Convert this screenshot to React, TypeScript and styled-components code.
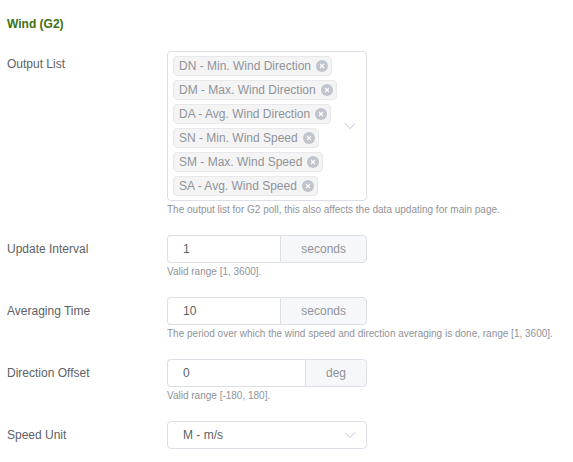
import React from "react";
import styled, { createGlobalStyle } from "styled-components";

const GlobalStyle = createGlobalStyle`
  html, body { margin: 0; padding: 0; background: #ffffff; }
  body { font-family: "Liberation Sans", Arial, sans-serif; }
  * { box-sizing: border-box; }
`;

const Page = styled.div`
  padding: 17px 7px 0 7px;
  font-family: "Liberation Sans", Arial, sans-serif;
`;

const Title = styled.div`
  font-size: 12px;
  line-height: 14px;
  font-weight: bold;
  color: #3c7014;
  margin-bottom: 20px;
`;

const FormItem = styled.div`
  display: grid;
  grid-template-columns: 160px 200px;
  align-items: start;
  margin-bottom: 18px;
`;

const Label = styled.div<{ $lh: number }>`
  font-size: 12px;
  line-height: ${(p) => p.$lh}px;
  color: #606266;
  white-space: nowrap;
`;

const Content = styled.div`
  display: flex;
  flex-direction: column;
  min-width: 0;
`;

const Help = styled.div`
  margin-top: 2px;
  font-size: 10px;
  line-height: 14px;
  color: #909399;
  white-space: nowrap;
`;

const SelectBox = styled.div`
  display: flex;
  align-items: center;
  width: 200px;
  border: 1px solid #dcdfe6;
  border-radius: 4px;
  background: #fff;
`;

const MultiBox = styled(SelectBox)`
  padding: 4px 10px 4px 5px;
`;

const TagList = styled.div`
  flex: 1;
  display: flex;
  flex-direction: column;
  align-items: flex-start;
  gap: 4px;
`;

const Tag = styled.span`
  display: inline-flex;
  align-items: center;
  height: 20px;
  padding: 0 3px 0 5px;
  background: #f4f4f5;
  border: 1px solid #e9e9eb;
  border-radius: 4px;
  color: #909399;
  font-size: 12px;
  white-space: nowrap;
`;

const Close = styled.span`
  display: inline-flex;
  align-items: center;
  justify-content: center;
  width: 12px;
  height: 12px;
  margin-left: 5px;
  border-radius: 50%;
  background: #c0c4cc;
`;

const Arrow = styled.svg`
  width: 12px;
  height: 8px;
  flex: none;
`;

const SingleBox = styled(SelectBox)`
  height: 28px;
  padding: 0 10px 0 15px;
  justify-content: space-between;
`;

const SelectValue = styled.span`
  font-size: 12px;
  color: #606266;
`;

const InputGroup = styled.div`
  display: flex;
  width: 200px;
  height: 28px;
`;

const Input = styled.div`
  flex: 1;
  display: flex;
  align-items: center;
  padding: 0 15px;
  border: 1px solid #dcdfe6;
  border-right: none;
  border-radius: 4px 0 0 4px;
  font-size: 12px;
  color: #606266;
  background: #fff;
`;

const Append = styled.div`
  flex: none;
  display: flex;
  align-items: center;
  padding: 0 20px;
  border: 1px solid #dcdfe6;
  border-radius: 0 4px 4px 0;
  background: #f5f7fa;
  color: #909399;
  font-size: 12px;
`;

const ChevronDown = () => (
  <Arrow viewBox="0 0 12 8">
    <path d="M1 1.5 L6 6.5 L11 1.5" fill="none" stroke="#c0c4cc" strokeWidth="1" />
  </Arrow>
);

const CloseIcon = () => (
  <Close>
    <svg width="8" height="8" viewBox="0 0 8 8">
      <path d="M2 2 L6 6 M6 2 L2 6" stroke="#ffffff" strokeWidth="1.1" />
    </svg>
  </Close>
);

const tags = [
  "DN - Min. Wind Direction",
  "DM - Max. Wind Direction",
  "DA - Avg. Wind Direction",
  "SN - Min. Wind Speed",
  "SM - Max. Wind Speed",
  "SA - Avg. Wind Speed",
];

const inputRows = [
  { label: "Update Interval", value: "1", unit: "seconds", help: "Valid range [1, 3600]." },
  {
    label: "Averaging Time",
    value: "10",
    unit: "seconds",
    help: "The period over which the wind speed and direction averaging is done, range [1, 3600].",
  },
  { label: "Direction Offset", value: "0", unit: "deg", help: "Valid range [-180, 180]." },
];

export default function App() {
  return (
    <>
      <GlobalStyle />
      <Page>
        <Title>Wind (G2)</Title>
        <FormItem>
          <Label $lh={27}>Output List</Label>
          <Content>
            <MultiBox>
              <TagList>
                {tags.map((t) => (
                  <Tag key={t}>
                    {t}
                    <CloseIcon />
                  </Tag>
                ))}
              </TagList>
              <ChevronDown />
            </MultiBox>
            <Help>The output list for G2 poll, this also affects the data updating for main page.</Help>
          </Content>
        </FormItem>
        {inputRows.map((r) => (
          <FormItem key={r.label}>
            <Label $lh={28}>{r.label}</Label>
            <Content>
              <InputGroup>
                <Input>{r.value}</Input>
                <Append>{r.unit}</Append>
              </InputGroup>
              <Help>{r.help}</Help>
            </Content>
          </FormItem>
        ))}
        <FormItem>
          <Label $lh={28}>Speed Unit</Label>
          <Content>
            <SingleBox>
              <SelectValue>M - m/s</SelectValue>
              <ChevronDown />
            </SingleBox>
          </Content>
        </FormItem>
      </Page>
    </>
  );
}
